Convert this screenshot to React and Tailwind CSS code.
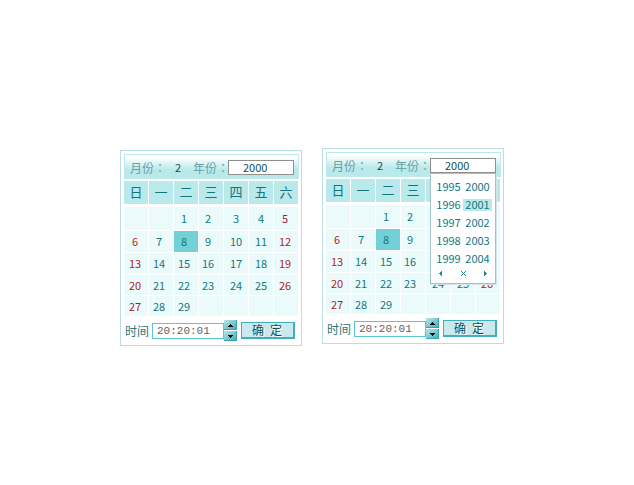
import React, { useId } from "react";

const WEEKDAYS = ["日", "一", "二", "三", "四", "五", "六"];

const WEEKS = [
  { height: "h-[23px]", days: ["", "", 1, 2, 3, 4, 5] },
  { height: "h-[21px]", days: [6, 7, 8, 9, 10, 11, 12] },
  { height: "h-[21px]", days: [13, 14, 15, 16, 17, 18, 19] },
  { height: "h-5", days: [20, 21, 22, 23, 24, 25, 26] },
  { height: "h-5", days: [27, 28, 29, "", "", "", ""] },
];

const COLUMN_PADDING = ["pr-0.5", "pr-1", "pr-1", "pr-1.5", "pr-0", "pr-0", "pr-0.5"];

const YEARS = [1995, 2000, 1996, 2001, 1997, 2002, 1998, 2003, 1999, 2004];

function YearMenu() {
  return (
    <div className="absolute left-0 top-full z-10 w-full border border-[#9fc4c8] bg-white pl-[3px] pt-[7px] pb-[6px] shadow-[1px_1px_0_#d5e6e8]">
      <div className="grid grid-cols-[29px_29px] gap-y-1.5">
        {YEARS.map((year) => (
          <button
            key={year}
            type="button"
            className={
              "flex h-3 items-center justify-center pb-0.5 text-[11px] leading-3 text-[#12777d] " +
              (year === 2001 ? "bg-[#b9e9ea]" : "")
            }
          >
            {year}
          </button>
        ))}
      </div>
      <div className="mt-[5px] flex h-[7px] items-center justify-between pl-[5px] pr-2 text-[#1b8d93]">
        <button type="button" aria-label="上一页">
          <svg className="block" width="3" height="5" viewBox="0 0 3 5" shapeRendering="crispEdges">
            <path d="M0 2h3v1H0zM1 1h2v3H1zM2 0h1v5H2z" fill="currentColor" />
          </svg>
        </button>
        <button type="button" aria-label="关闭">
          <svg className="block" width="5" height="5" viewBox="0 0 5 5" shapeRendering="crispEdges">
            <path
              d="M0 0h1v1H0zM4 0h1v1H4zM1 1h1v1H1zM3 1h1v1H3zM2 2h1v1H2zM1 3h1v1H1zM3 3h1v1H3zM0 4h1v1H0zM4 4h1v1H4z"
              fill="currentColor"
            />
          </svg>
        </button>
        <button type="button" aria-label="下一页">
          <svg className="block" width="3" height="5" viewBox="0 0 3 5" shapeRendering="crispEdges">
            <path d="M0 2h3v1H0zM0 1h2v3H0zM0 0h1v5H0z" fill="currentColor" />
          </svg>
        </button>
      </div>
    </div>
  );
}

function SpinButton({ up }) {
  return (
    <button
      type="button"
      aria-label={up ? "增加" : "减少"}
      className="flex h-2.5 w-[13px] items-center justify-center border-b border-r border-[#35a7b2] bg-linear-to-br from-[#b5e8ea] to-[#3fb0ba]"
    >
      <svg width="7" height="4" viewBox="0 0 7 4" shapeRendering="crispEdges" fill="#000">
        {up ? (
          <path d="M3 1h1v1H3zM2 2h3v1H2zM1 3h5v1H1z" />
        ) : (
          <path d="M1 1h5v1H1zM2 2h3v1H2zM3 3h1v1H3z" />
        )}
      </svg>
    </button>
  );
}

function DatePicker({ open = false }) {
  const id = useId();
  return (
    <section className="w-[182px] border border-[#bcdde0] bg-white px-0.5 pb-1 pt-[3px]">
      <div className="ml-px flex h-[25px] items-center border border-[#bdebec] bg-linear-to-b from-white from-10% to-[#b9e9eb] to-65% pl-[5px] pt-0.5 font-['Noto_Sans_CJK_TC',sans-serif] text-xs text-[#6a9fa3]">
        <label htmlFor={id + "m"} className="w-[45px] whitespace-nowrap">
          月份：
        </label>
        <input
          id={id + "m"}
          defaultValue="2"
          className="h-[15px] w-[18px] bg-transparent pb-0.5 text-[11px] leading-3 text-[#0b5257] outline-none"
        />
        <label htmlFor={id + "y"} className="w-[35px] whitespace-nowrap">
          年份：
        </label>
        <div className="relative w-[66px]">
          <input
            id={id + "y"}
            defaultValue="2000"
            className="block h-[15px] w-full border border-[#8f8f8f] bg-white pb-0.5 pl-3.5 text-[11px] leading-3 text-[#0b5257] outline-none"
          />
          {open && <YearMenu />}
        </div>
      </div>

      <table className="mt-px w-full table-fixed border-separate border-spacing-px text-center text-[11px] leading-3 text-[#12777d]">
        <thead>
          <tr>
            {WEEKDAYS.map((name) => (
              <th
                key={name}
                scope="col"
                className="h-[25px] border-b-2 border-white bg-[#b9e9eb] px-0 pb-0.5 pt-0 text-[13px] font-normal leading-4"
              >
                {name}
              </th>
            ))}
          </tr>
        </thead>
        <tbody>
          {WEEKS.map((week, row) => (
            <tr key={row}>
              {week.days.map((day, col) => (
                <td
                  key={col}
                  className={[
                    "pb-px pl-0 pt-0",
                    week.height,
                    COLUMN_PADDING[col],
                    day === 8 ? "bg-[#74d0d7]" : "bg-[#ebfbfb]",
                    col === 0 || col === 6 ? "text-[#b01c1c]" : "",
                  ].join(" ")}
                >
                  {day}
                </td>
              ))}
            </tr>
          ))}
        </tbody>
      </table>

      <div className="mt-[3px] flex h-[21px] items-center pl-0.5">
        <label htmlFor={id + "t"} className="w-[27px] whitespace-nowrap text-xs text-[#2b7479]">
          时间
        </label>
        <input
          id={id + "t"}
          defaultValue="20:20:01"
          className="h-4 w-[72px] border border-[#5cc6cc] bg-white pl-1 font-['Liberation_Mono',monospace] text-[11px] leading-3 text-[#626262] outline-none"
        />
        <div className="flex flex-col gap-px">
          <SpinButton up />
          <SpinButton />
        </div>
        <button
          type="button"
          className="ml-1 flex h-[17px] w-[54px] items-center justify-center gap-1.5 border border-[#3fb0ba] bg-[#c9e9ee] pb-px pr-0.5 text-xs leading-3 text-[#0b5257] shadow-[inset_-1px_-1px_0_#3fb0ba] [text-shadow:1px_1px_0_#ffffff]"
        >
          <span>确</span>
          <span>定</span>
        </button>
      </div>
    </section>
  );
}

export default function App() {
  return (
    <main className="flex min-h-screen items-start justify-center gap-5 bg-white pr-2.5 pt-[148px] font-['Noto_Sans_CJK_SC',sans-serif]">
      <div className="pt-0.5">
        <DatePicker />
      </div>
      <DatePicker open />
    </main>
  );
}
